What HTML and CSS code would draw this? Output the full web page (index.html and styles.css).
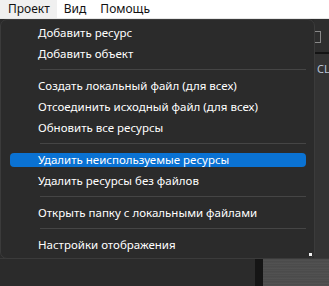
FILE: index.html
```html
<!DOCTYPE html>
<html lang="ru">
<head>
<meta charset="utf-8">
<link rel="stylesheet" href="styles.css">
</head>
<body>
<div class="menubar">
  <span class="mb-item active">Проект</span>
  <span class="mb-item">Вид</span>
  <span class="mb-item">Помощь</span>
</div>
<div class="app">
  <div class="upper">
    <div class="main"></div>
    <div class="side">
      <div class="side-tool"><span class="sq"></span></div>
      <div class="side-panel"><span class="cl">CL</span></div>
    </div>
  </div>
  <div class="lower">
    <div class="lw-a"></div>
    <div class="lw-b"></div>
    <div class="lw-c"></div>
  </div>
</div>
<div class="menu">
  <div class="item">Добавить ресурс</div>
  <div class="item">Добавить объект</div>
  <div class="sep"></div>
  <div class="item">Создать локальный файл (для всех)</div>
  <div class="item">Отсоединить исходный файл (для всех)</div>
  <div class="item">Обновить все ресурсы</div>
  <div class="sep"></div>
  <div class="item hl">Удалить неиспользуемые ресурсы</div>
  <div class="item">Удалить ресурсы без файлов</div>
  <div class="sep"></div>
  <div class="item">Открыть папку с локальными файлами</div>
  <div class="sep"></div>
  <div class="item">Настройки отображения</div>
  <span class="grip"></span>
</div>
</body>
</html>
```

FILE: styles.css
```css
* { box-sizing: border-box; }
html, body { margin: 0; padding: 0; }
body {
  width: 329px;
  height: 286px;
  overflow: hidden;
  font-family: "Noto Sans", "Open Sans", sans-serif;
  font-size: 12px;
  background: #2b2b2b;
  position: relative;
}
.menubar {
  height: 19px;
  background: #ffffff;
  display: flex;
  align-items: flex-start;
  border-bottom: 1px solid #e6e6e6;
}
.mb-item {
  height: 18px;
  line-height: 18px;
  padding: 0 7px;
  color: #111;
}
.mb-item.active {
  background: #f0f0f0;
  padding: 0 7px 0 8px;
}
.app {
  height: 267px;
  display: flex;
  flex-direction: column;
}
.upper {
  height: 239px;
  display: flex;
}
.main { flex: 1; background: #2b2b2b; }
.side {
  width: 15px;
  display: flex;
  flex-direction: column;
  background: #333333;
}
.side-tool {
  height: 35px;
  background: #2e2e2e;
  border-bottom: 2px solid #141414;
  padding-top: 12px;
}
.sq {
  display: block;
  width: 7px;
  height: 12px;
  border: 1px solid #8a8a8a;
  border-left: none;
}
.side-panel {
  flex: 1;
  background: #333333;
  padding-top: 7px;
  overflow: hidden;
}
.cl {
  display: block;
  color: #b9c3d6;
  font-size: 11px;
  padding-left: 3px;
  white-space: nowrap;
}
.lower {
  flex: 1;
  display: flex;
  border-top: 1px solid #3a3a3a;
}
.lw-a { width: 255px; background: #2b2b2b; }
.lw-b { width: 8px; background: #151515; }
.lw-c {
  flex: 1;
  background:
    repeating-linear-gradient(180deg, #4a4a4a 0, #525252 2px, #444 3px, #575757 4px, #4c4c4c 5px),
    #4d4d4d;
}
.menu {
  position: absolute;
  left: 0;
  top: 19px;
  width: 315px;
  height: 240px;
  background: #2b2b2b;
  border: 1px solid #3b3b3b;
  border-radius: 7px;
  padding: 2px 0;
  display: flex;
  flex-direction: column;
  font-size: 11.5px;
}
.item {
  height: 21px;
  line-height: 21px;
  color: #ffffff;
  margin: 0 8px 0 9px;
  padding-left: 28px;
  border-radius: 4px;
  white-space: nowrap;
}
.item.hl {
  background: #0a72d3;
  height: 14px;
  line-height: 14px;
  margin-top: 4px;
  margin-bottom: 3px;
}
.sep {
  height: 11px;
  position: relative;
  margin: 0 8px 0 39px;
}
.sep::after {
  content: "";
  position: absolute;
  left: 0; right: 0;
  top: 5px;
  height: 1px;
  background: #454545;
}
.grip {
  position: absolute;
  right: 2px;
  bottom: 2px;
  width: 3px;
  height: 3px;
  background: #f0f0f0;
}
```
